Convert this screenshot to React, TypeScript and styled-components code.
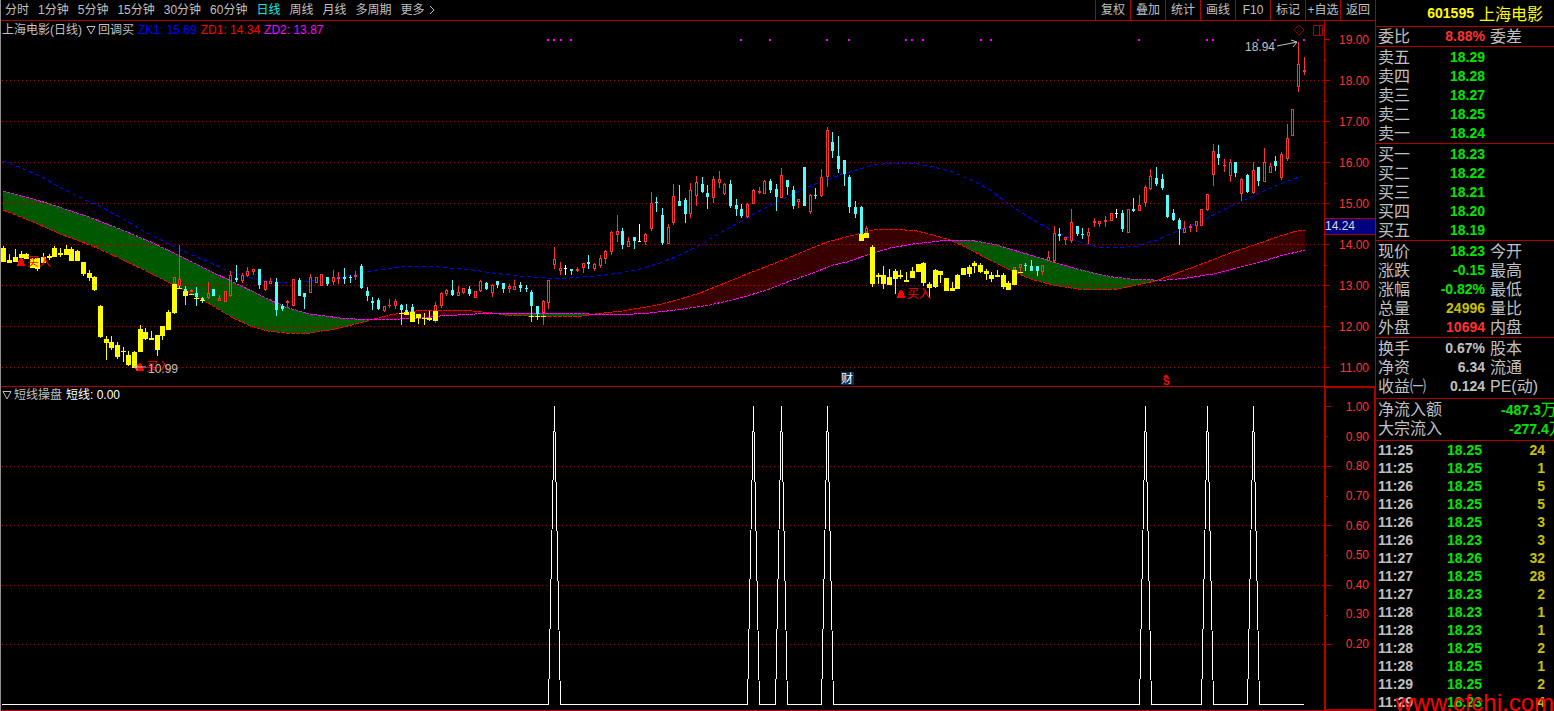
import React from 'react';
import styled, { createGlobalStyle } from 'styled-components';

const color = {
  line: '#b00000',
  text: '#c0c0c0',
  up: '#ff3232',
  down: '#54fcfc',
  signal: '#ffff00',
  green: '#00e600',
  olive: '#c8c000',
  magenta: '#ff00ff',
};

const GlobalStyle = createGlobalStyle`
  * { box-sizing: border-box; }
  body {
    margin: 0;
    background: #000;
    color: ${color.text};
    font-family: "Liberation Sans", "Noto Sans CJK SC", sans-serif;
    font-size: 12px;
  }
  button { font: inherit; }
`;

/* ---------- layout ---------- */

const Page = styled.div`
  display: grid;
  grid-template-columns: minmax(0, 1fr) 179px;
  min-height: 100vh;
`;

const ChartColumn = styled.main`
  display: flex;
  flex-direction: column;
  min-width: 0;
  border-left: 1px solid #909090;
`;

const Toolbar = styled.header`
  display: flex;
  justify-content: space-between;
  height: 21px;
  border-bottom: 1px solid ${color.line};
`;

const Periods = styled.nav`
  display: flex;
  align-items: center;
  gap: 9px;
  padding-left: 4px;
`;

const PeriodButton = styled.button<{ $active?: boolean }>`
  display: flex;
  align-items: center;
  gap: 4px;
  padding: 0;
  border: 0;
  background: none;
  color: ${(p) => (p.$active ? '#00f0f0' : color.text)};
  line-height: 20px;
  white-space: nowrap;
`;

const Tools = styled.div`
  display: flex;
`;

const ToolButton = styled.button`
  width: 35px;
  padding: 0;
  border: 0;
  border-left: 1px solid ${color.line};
  background: none;
  color: ${color.text};
  line-height: 20px;
  white-space: nowrap;
`;

const Pane = styled.section<{ $grow?: boolean }>`
  display: grid;
  grid-template-columns: minmax(0, 1fr) 51px;
  flex: ${(p) => (p.$grow ? '1 0 auto' : 'none')};
  border-bottom: 1px solid ${color.line};
`;

const Plot = styled.div`
  display: flex;
  flex-direction: column;
  min-width: 0;
`;

const PlotTitle = styled.div`
  display: flex;
  align-items: center;
  gap: 4px;
  height: 16px;
  padding: 0 1px;
  line-height: 16px;
  white-space: nowrap;
`;

const MainTitle = styled(PlotTitle)`
  padding-top: 2px;
`;

const TitleButton = styled.button`
  display: flex;
  align-items: center;
  gap: 2px;
  padding: 0;
  border: 0;
  background: none;
  color: inherit;
  line-height: 16px;
`;

const Legend = styled.span<{ $color: string }>`
  color: ${(p) => p.$color};
`;

const TitleIcons = styled.div`
  display: flex;
  align-items: center;
  gap: 8px;
  margin-left: auto;
`;

const MainChart = styled.svg`
  display: block;
  width: 100%;
  height: 349px;
`;

const SubChart = styled.svg`
  display: block;
  width: 100%;
  height: 0;
  min-height: 307px;
  flex: 1 0 0;
`;

const Axis = styled.div<{ $boxed?: boolean }>`
  position: relative;
  display: grid;
  grid-template-columns: 6px 1fr;
  border: 0 solid ${color.line};
  border-width: ${(p) => (p.$boxed ? '1px 1px 1px 2px' : '0 0 0 1px')};
`;

const Ticks = styled.svg`
  display: block;
  width: 6px;
  height: 100%;
`;

const PriceLabels = styled.div`
  padding-right: 6px;
  text-align: right;
  color: ${color.up};
`;

const PriceLabel = styled.div`
  height: 41px;
  line-height: 38px;
  &:last-child { height: 37px; }
`;

const RatioLabels = styled.div`
  display: flex;
  flex-direction: column;
  justify-content: space-between;
  padding: 12px 5px 58px 0;
  text-align: right;
  color: ${color.up};
  line-height: 14px;
`;

const CursorPrice = styled.output`
  position: absolute;
  top: 197px;
  left: 0;
  width: 50px;
  height: 17px;
  border: solid ${color.line};
  border-width: 1px 0;
  background: #000080;
  color: #d8d8d8;
  line-height: 15px;
`;

/* ---------- quote panel ---------- */

const Side = styled.aside`
  position: relative;
  overflow: hidden;
  border-left: 1px solid ${color.line};
  font-size: 16px;
`;

const StockHeader = styled.h1`
  display: flex;
  justify-content: flex-end;
  align-items: center;
  gap: 5px;
  height: 27px;
  margin: 0;
  padding-right: 11px;
  border-bottom: 1px solid ${color.line};
  color: #ffff00;
  font-size: 16px;
  font-weight: 400;
`;

const StockCode = styled.span`
  font-size: 14px;
  font-weight: 700;
`;

const Group = styled.dl<{ $kind?: 'single' | 'short' }>`
  margin: 0;
  padding: ${(p) => (p.$kind === 'single' ? '0' : p.$kind === 'short' ? '1px 0 2px' : '1px 0 0')};
  border-bottom: 1px solid ${color.line};
`;

const QuoteRow = styled.div`
  display: grid;
  grid-template-columns: auto 1fr 64px;
  column-gap: 5px;
  height: 19px;
  padding-left: 2px;
  line-height: 19px;
  white-space: nowrap;
`;

const FlowRow = styled.div`
  display: flex;
  justify-content: space-between;
  height: 19px;
  padding-left: 2px;
  line-height: 19px;
  white-space: nowrap;
`;

const Value = styled.dd<{ $color: string }>`
  margin: 0;
  color: ${(p) => p.$color};
  font-size: 14px;
  font-weight: 700;
  text-align: right;
`;

const FlowValue = styled(Value)<{ $width: number }>`
  width: ${(p) => p.$width}px;
  overflow: hidden;
  text-align: left;
`;

const Unit = styled.span`
  font-size: 16px;
  font-weight: 400;
`;

const Trades = styled.table`
  width: 100%;
  border-collapse: collapse;
  table-layout: fixed;
  font-size: 14px;
  font-weight: 700;
`;

const TradeCell = styled.td<{ $kind: 'time' | 'price' | 'volume' }>`
  height: 18px;
  width: ${(p) => (p.$kind === 'time' ? '50px' : p.$kind === 'price' ? '56px' : 'auto')};
  padding: ${(p) => (p.$kind === 'time' ? '0 0 0 2px' : p.$kind === 'price' ? '0' : '0 9px 0 0')};
  color: ${(p) => (p.$kind === 'time' ? color.text : p.$kind === 'price' ? color.green : color.olive)};
  text-align: ${(p) => (p.$kind === 'time' ? 'left' : 'right')};
  line-height: 18px;
`;

const Watermark = styled.a`
  position: absolute;
  right: 0;
  bottom: -4px;
  color: #ff0000;
  font-size: 24px;
  line-height: 24px;
  text-decoration: none;
`;

/* ---------- chart data ---------- */

type Candle = [x: number, high: number, top: number, bottom: number, low: number];

const signalCandles: Candle[] = [
  [3, 246, 248, 262, 262], [9, 254, 260, 263, 263], [15, 249, 257, 262, 262], [21, 251, 254, 258, 260],
  [26, 253, 254, 259, 259], [32, 258, 259, 268, 268], [37, 258, 258, 269, 271], [43, 253, 257, 263, 263],
  [49, 254, 256, 258, 260], [54, 246, 248, 257, 257], [60, 248, 253, 255, 257], [66, 245, 249, 255, 255],
  [71, 247, 249, 261, 261], [77, 250, 251, 261, 261], [83, 262, 262, 274, 276], [89, 270, 273, 278, 281],
  [94, 276, 277, 290, 291], [100, 305, 306, 337, 338], [106, 336, 339, 343, 360], [111, 336, 342, 348, 350],
  [117, 342, 345, 357, 359], [123, 347, 351, 352, 362], [128, 351, 355, 365, 366], [134, 351, 352, 368, 368],
  [140, 325, 329, 352, 352], [145, 328, 332, 339, 340], [151, 331, 338, 340, 340], [157, 335, 335, 350, 356],
  [162, 326, 326, 336, 340], [168, 310, 312, 330, 330], [174, 284, 284, 313, 314], [179, 286, 288, 289, 289],
  [185, 291, 291, 296, 296], [191, 294, 294, 295, 295], [196, 297, 298, 299, 299], [202, 299, 300, 301, 301],
  [401, 313, 313, 314, 314], [406, 312, 312, 315, 315], [412, 312, 312, 322, 322], [418, 314, 314, 318, 324],
  [424, 313, 318, 319, 325], [429, 311, 318, 320, 321], [435, 311, 311, 321, 321], [531, 316, 316, 317, 317],
  [537, 316, 316, 317, 317], [543, 316, 316, 317, 317], [861, 234, 234, 241, 241], [866, 233, 233, 238, 238],
  [872, 245, 247, 284, 287], [878, 273, 275, 277, 284], [883, 266, 275, 284, 289], [889, 269, 277, 285, 285],
  [895, 269, 271, 279, 294], [900, 270, 275, 277, 279], [906, 272, 280, 282, 282], [912, 267, 271, 278, 278],
  [918, 264, 264, 272, 272], [923, 262, 263, 283, 286], [929, 282, 284, 288, 298], [935, 269, 270, 287, 288],
  [940, 271, 271, 275, 283], [946, 278, 278, 291, 291], [952, 282, 288, 291, 291], [957, 274, 275, 289, 289],
  [963, 268, 268, 275, 275], [969, 265, 267, 274, 277], [974, 261, 263, 266, 273], [980, 263, 265, 272, 273],
  [986, 269, 271, 274, 280], [991, 272, 275, 279, 282], [997, 270, 275, 277, 277], [1003, 273, 275, 287, 289],
  [1008, 281, 283, 290, 290], [1014, 270, 270, 285, 285], [1020, 272, 272, 273, 273],
];

const fallingCandles: Candle[] = [
  [185, 286, 289, 291, 305], [196, 287, 293, 297, 306], [202, 297, 298, 300, 303], [213, 289, 289, 296, 296],
  [236, 265, 278, 280, 282], [259, 269, 269, 285, 289], [276, 278, 282, 310, 316], [282, 304, 306, 309, 311],
  [299, 278, 280, 296, 296], [304, 293, 293, 297, 309], [327, 277, 277, 284, 286], [344, 268, 277, 279, 284],
  [350, 275, 277, 278, 283], [361, 264, 266, 288, 289], [367, 287, 291, 296, 301], [372, 297, 301, 303, 310],
  [378, 298, 300, 309, 310], [401, 304, 305, 310, 325], [406, 304, 310, 312, 312], [412, 304, 307, 312, 312],
  [452, 280, 290, 295, 296], [469, 286, 289, 294, 296], [486, 282, 283, 289, 290], [497, 281, 281, 285, 288],
  [503, 283, 283, 289, 293], [520, 282, 285, 288, 292], [526, 285, 288, 289, 292], [531, 290, 292, 306, 322],
  [537, 306, 306, 314, 320], [571, 269, 269, 271, 275], [588, 255, 262, 264, 269], [622, 228, 231, 245, 249],
  [634, 237, 237, 241, 249], [656, 197, 202, 203, 212], [662, 208, 215, 243, 245], [679, 185, 201, 206, 206],
  [685, 198, 200, 214, 223], [702, 177, 184, 192, 193], [707, 185, 193, 197, 209], [730, 180, 184, 206, 208],
  [736, 199, 205, 209, 216], [741, 204, 209, 216, 218], [770, 179, 181, 190, 193], [776, 184, 189, 197, 211],
  [787, 180, 180, 187, 195], [793, 186, 190, 206, 209], [804, 167, 167, 206, 206], [815, 188, 195, 196, 199],
  [832, 132, 142, 151, 158], [838, 136, 156, 169, 173], [844, 160, 160, 174, 186], [849, 175, 177, 207, 213],
  [855, 201, 207, 214, 218], [861, 206, 207, 234, 234], [1025, 263, 265, 266, 271], [1031, 260, 266, 271, 271],
  [1037, 266, 266, 271, 276], [1059, 228, 234, 236, 241], [1077, 226, 226, 234, 236], [1082, 228, 234, 235, 239],
  [1122, 210, 213, 229, 232], [1133, 198, 209, 211, 212], [1156, 167, 178, 184, 186], [1162, 174, 179, 188, 190],
  [1167, 195, 195, 217, 218], [1173, 209, 213, 220, 221], [1179, 218, 220, 229, 245], [1218, 145, 154, 158, 165],
  [1235, 162, 162, 173, 177], [1247, 174, 175, 192, 193], [1258, 167, 167, 181, 186], [1275, 156, 161, 166, 171],
];

const risingCandles: Candle[] = [
  [174, 277, 277, 284, 284], [179, 245, 279, 286, 287], [191, 289, 290, 292, 292], [208, 282, 293, 298, 299],
  [219, 295, 298, 301, 301], [225, 291, 291, 302, 302], [230, 271, 275, 296, 297], [242, 273, 275, 281, 283],
  [247, 267, 271, 276, 277], [253, 269, 269, 272, 275], [265, 281, 281, 290, 291], [270, 278, 281, 284, 284],
  [287, 300, 301, 303, 307], [293, 279, 279, 306, 306], [310, 274, 277, 293, 293], [316, 277, 277, 283, 283],
  [321, 274, 274, 286, 286], [333, 270, 277, 282, 285], [338, 272, 277, 279, 284], [355, 271, 275, 277, 280],
  [384, 306, 306, 311, 312], [389, 299, 305, 306, 308], [395, 299, 301, 306, 309], [435, 302, 305, 311, 323],
  [441, 292, 293, 306, 308], [446, 289, 290, 294, 296], [458, 286, 292, 296, 296], [463, 288, 288, 293, 294],
  [475, 291, 291, 298, 298], [480, 280, 281, 291, 292], [492, 284, 285, 293, 297], [509, 284, 286, 289, 293],
  [514, 280, 286, 290, 290], [543, 300, 301, 313, 325], [548, 280, 280, 303, 309], [554, 247, 259, 265, 269],
  [560, 262, 268, 271, 275], [577, 267, 269, 271, 272], [583, 263, 263, 268, 273], [594, 263, 264, 269, 271],
  [600, 255, 258, 266, 268], [605, 250, 251, 259, 264], [611, 231, 232, 252, 255], [617, 215, 231, 235, 242],
  [628, 237, 241, 247, 247], [645, 233, 234, 242, 245], [651, 192, 203, 229, 231], [668, 224, 227, 244, 244],
  [673, 184, 196, 223, 225], [690, 183, 190, 214, 218], [696, 176, 182, 196, 206], [713, 176, 179, 198, 203],
  [719, 171, 179, 183, 188], [724, 183, 184, 194, 195], [747, 203, 204, 217, 218], [753, 189, 190, 204, 204],
  [759, 187, 191, 193, 194], [764, 180, 181, 194, 194], [781, 168, 175, 198, 198], [798, 199, 199, 202, 208],
  [810, 194, 195, 212, 214], [821, 169, 177, 196, 197], [827, 127, 130, 177, 187], [866, 226, 228, 233, 233],
  [1014, 267, 267, 270, 270], [1020, 264, 264, 268, 272], [1042, 265, 265, 272, 275], [1048, 251, 257, 261, 261],
  [1054, 226, 233, 261, 263], [1065, 237, 237, 240, 245], [1071, 209, 222, 241, 243], [1088, 228, 232, 236, 244],
  [1094, 218, 221, 223, 227], [1099, 221, 221, 224, 227], [1105, 216, 220, 222, 227], [1111, 213, 213, 221, 221],
  [1128, 209, 209, 233, 233], [1139, 195, 205, 211, 211], [1145, 185, 187, 203, 207], [1150, 169, 176, 189, 190],
  [1184, 221, 228, 233, 233], [1190, 224, 226, 228, 232], [1196, 221, 221, 226, 232], [1201, 209, 209, 226, 226],
  [1207, 194, 194, 210, 211], [1213, 144, 151, 175, 186], [1224, 159, 165, 166, 172], [1230, 159, 162, 176, 182],
  [1241, 178, 179, 194, 201], [1253, 162, 170, 193, 194], [1264, 148, 162, 182, 182], [1270, 163, 166, 173, 173],
  [1281, 152, 154, 178, 180], [1287, 124, 138, 159, 161], [1292, 109, 109, 136, 136], [1298, 42, 64, 87, 92],
  [1304, 57, 70, 72, 75],
];

const flatCandles: Candle[] = [[565, 265, 268, 269, 275], [639, 224, 241, 242, 242], [1116, 209, 213, 214, 218]];

type Point = [number, number];

const zk1: Point[] = [
  [3, 161], [14, 165], [40, 176], [63, 189], [83, 199], [97, 205], [120, 217], [143, 231], [167, 243], [187, 253],
  [207, 261], [230, 272], [247, 277], [267, 281], [287, 283], [310, 281], [333, 279], [353, 275], [377, 270],
  [400, 267], [427, 266], [450, 268], [473, 270], [493, 273], [520, 276], [547, 278], [570, 278], [597, 276],
  [620, 273], [640, 269], [660, 263], [680, 255], [700, 245], [720, 233], [740, 222], [763, 209], [787, 197],
  [803, 189], [823, 181], [840, 175], [857, 170], [873, 165], [893, 163], [913, 163], [933, 167], [953, 172],
  [973, 181], [990, 190], [1010, 205], [1030, 218], [1053, 231], [1077, 241], [1097, 247], [1117, 248],
  [1137, 246], [1157, 240], [1177, 231], [1200, 222], [1227, 208], [1253, 196], [1280, 184], [1302, 176],
];

const zd1: Point[] = [
  [3, 210], [36, 223], [60, 234], [90, 245], [119, 258], [150, 273], [176, 286], [203, 300], [233, 318], [250, 326],
  [268, 331], [285, 333], [310, 333], [335, 329], [360, 323], [370, 320], [390, 315], [407, 312], [425, 310],
  [463, 310], [493, 313], [505, 315], [527, 316], [582, 316], [595, 314], [622, 311], [640, 308], [657, 305],
  [677, 300], [700, 293], [720, 285], [747, 274], [773, 264], [800, 253], [827, 242], [850, 236], [873, 230],
  [893, 229], [917, 231], [933, 235], [950, 240], [967, 248], [990, 260], [1010, 270], [1033, 280], [1053, 285],
  [1077, 289], [1097, 290], [1117, 289], [1137, 285], [1155, 281], [1180, 272], [1207, 262], [1233, 252],
  [1260, 243], [1280, 236], [1300, 230], [1305, 230],
];

const zd2: Point[] = [
  [3, 191], [15, 194], [47, 203], [86, 216], [120, 229], [153, 243], [180, 256], [210, 271], [233, 282], [260, 295],
  [285, 307], [310, 314], [340, 318], [370, 320], [400, 319], [422, 318], [440, 316], [457, 315], [494, 313],
  [543, 313], [590, 314], [615, 315], [633, 314], [650, 313], [667, 311], [683, 309], [710, 305], [740, 298],
  [767, 290], [790, 281], [813, 273], [833, 265], [847, 262], [870, 254], [890, 248], [913, 244], [940, 241],
  [970, 240], [997, 245], [1013, 250], [1037, 257], [1060, 264], [1077, 269], [1097, 274], [1113, 277],
  [1130, 279], [1153, 280], [1167, 280], [1187, 278], [1213, 274], [1237, 268], [1260, 262], [1280, 256],
  [1305, 250],
];

const bands = [
  { from: 3, to: 370, fill: '#005800' },
  { from: 370, to: 494, fill: '#380000' },
  { from: 494, to: 590, fill: '#005800' },
  { from: 590, to: 950, fill: '#380000' },
  { from: 950, to: 1156, fill: '#005800' },
  { from: 1156, to: 1305, fill: '#380000' },
];

const alertDots = [547, 553, 560, 570, 740, 769, 826, 848, 905, 911, 922, 980, 990, 1138, 1206, 1212, 1257, 1274, 1303];
const spikes = [554, 753, 781, 827, 1145, 1207, 1253];
const priceGrid = [80, 121, 162, 203, 244, 285, 326, 367];
const ratioGrid = [466, 525, 585, 644];

const box = (x: number, y: number, w: number, h: number) => `M${x} ${y}h${w}v${h}h${-w}z`;

const solidPath = (candles: Candle[], width: number) =>
  candles
    .map(([x, hi, t, b, lo]) => {
      const wick = (hi < t ? box(x, hi, 1, t - hi) : '') + (lo > b ? box(x, b, 1, lo - b) : '');
      return wick + box(x - (width - 1) / 2, t, width, b - t);
    })
    .join('');

const hollowPath = (candles: Candle[]) =>
  candles
    .map(([x, hi, t, b, lo]) => {
      const wick = (hi < t ? box(x, hi, 1, t - hi) : '') + (lo > b ? box(x, b, 1, lo - b) : '');
      const inner = b - t > 2 ? box(x, t + 1, 1, b - t - 2) : '';
      return wick + box(x - 1, t, 3, b - t) + inner;
    })
    .join('');

const toPoints = (points: Point[]) => points.map((p) => p.join(',')).join(' ');

const valueAt = (points: Point[], x: number) => {
  const i = Math.max(1, points.findIndex((p) => p[0] >= x));
  const [x0, y0] = points[i - 1];
  const [x1, y1] = points[i];
  return y0 + ((y1 - y0) * (x - x0)) / (x1 - x0);
};

const bandPoints = (from: number, to: number) => {
  const xs: number[] = [];
  for (let x = from; x <= to; x += 1) xs.push(x);
  const upper: Point[] = xs.map((x) => [x, valueAt(zd1, x)]);
  const lower: Point[] = xs.reverse().map((x) => [x, valueAt(zd2, x)]);
  return toPoints([...upper, ...lower]);
};

const spikeLine = `M2 704.5${spikes.map((x) => `H${x - 5.5}L${x + 0.5} 406L${x + 6.5} 704.5`).join('')}H1304`;

/* ---------- drawings ---------- */

const Triangle = () => (
  <svg width="10" height="10" viewBox="0 0 10 10" fill="none" stroke="currentColor" aria-hidden="true">
    <path d="M1 1.5H9L5 9Z" />
  </svg>
);

const Chevron = () => (
  <svg width="6" height="10" viewBox="0 0 6 10" fill="none" stroke="currentColor" aria-hidden="true">
    <path d="M1 1L5 5L1 9" />
  </svg>
);

const BuyMark = ({ x, y }: { x: number; y: number }) => (
  <g fill="#ff0000">
    <path d={`M${x} ${y}h8v-2h-1v-3h-1v-2h-1v-1h-2v1h-1v2h-1v3h-1z`} />
    <text x={x + 10} y={y} fontSize="12">买入</text>
  </g>
);

const Candles = () => (
  <MainChart viewBox="1 37 1323 349" preserveAspectRatio="none" role="img" aria-label="日线">
    <g shapeRendering="crispEdges" fill="none">
      {bands.map((b) => (
        <polygon key={b.from} points={bandPoints(b.from, b.to)} fill={b.fill} />
      ))}
      {priceGrid.map((y) => (
        <line key={y} x1="2" x2="1324" y1={y + 0.5} y2={y + 0.5} stroke={color.line} strokeDasharray="1 3" />
      ))}
      <polyline points={toPoints(zk1)} stroke="#0000ff" strokeDasharray="4 3" />
      <polyline points={toPoints(zd1)} stroke="#ff0000" strokeDasharray="4 1" />
      <polyline points={toPoints(zd2)} stroke={color.magenta} strokeDasharray="3 1" />
      <path d={hollowPath(risingCandles)} fill={color.up} fillRule="evenodd" />
      <path d={solidPath(fallingCandles, 3)} fill={color.down} />
      <path d={solidPath(flatCandles, 3)} fill="#ffffff" />
      <path d={solidPath(signalCandles, 5)} fill={color.signal} />
      {alertDots.map((x) => (
        <rect key={x} x={x} y="39" width="2" height="2" fill={color.magenta} />
      ))}
    </g>
    <BuyMark x={17} y={266} />
    <BuyMark x={136} y={371} />
    <BuyMark x={897} y={298} />
    <g fill="none" stroke={color.text}>
      <path d="M1277 46L1297 42M1291 40L1297 42L1293 47" />
      <path d="M146 367H134M138 365L134 367L138 370" />
    </g>
    <g fill={color.text} fontSize="12">
      <text x="1245" y="51">18.94</text>
      <text x="148" y="373">10.99</text>
    </g>
    <rect x="841" y="372" width="13" height="13" fill="#003060" />
    <text x="841" y="383" fill="#ffffff" fontSize="12">财</text>
    <path d="M1163 377h6l-2-2h-2z" fill="#ff0000" />
    <text x="1163" y="385" fill="#ff0000" fontSize="10" fontWeight="700">S</text>
  </MainChart>
);

const Spikes = () => (
  <SubChart viewBox="1 403 1323 307" preserveAspectRatio="none" role="img" aria-label="短线">
    <g shapeRendering="crispEdges" fill="none">
      {ratioGrid.map((y) => (
        <line key={y} x1="2" x2="1324" y1={y + 0.5} y2={y + 0.5} stroke={color.line} strokeDasharray="1 3" />
      ))}
      <path d={spikeLine} stroke="#ffffff" strokeLinejoin="bevel" />
    </g>
  </SubChart>
);

const AxisTicks = ({ top, height, major, minor }: { top: number; height: number; major: number[]; minor: number[] }) => (
  <Ticks viewBox={`0 ${top} 6 ${height}`} preserveAspectRatio="none" aria-hidden="true">
    <g fill={color.line} shapeRendering="crispEdges">
      {major.map((y) => <rect key={y} x="0" y={y} width="5" height="1" />)}
      {minor.map((y) => <rect key={y} x="0" y={y} width="2" height="1" />)}
    </g>
  </Ticks>
);

/* ---------- content ---------- */

const periods = ['分时', '1分钟', '5分钟', '15分钟', '30分钟', '60分钟', '日线', '周线', '月线', '多周期'];
const tools = ['复权', '叠加', '统计', '画线', 'F10', '标记', '+自选', '返回'];
const prices = ['19.00', '18.00', '17.00', '16.00', '15.00', '14.00', '13.00', '12.00', '11.00'];
const ratios = ['1.00', '0.90', '0.80', '0.70', '0.60', '0.50', '0.40', '0.30', '0.20'];

type Quote = [label: string, value: string, tone: string, extra?: string];

const groups: { kind?: 'single' | 'short'; rows: Quote[] }[] = [
  { kind: 'single', rows: [['委比', '8.88%', color.up, '委差']] },
  {
    rows: [
      ['卖五', '18.29', color.green], ['卖四', '18.28', color.green], ['卖三', '18.27', color.green],
      ['卖二', '18.25', color.green], ['卖一', '18.24', color.green],
    ],
  },
  {
    rows: [
      ['买一', '18.23', color.green], ['买二', '18.22', color.green], ['买三', '18.21', color.green],
      ['买四', '18.20', color.green], ['买五', '18.19', color.green],
    ],
  },
  {
    rows: [
      ['现价', '18.23', color.green, '今开'], ['涨跌', '-0.15', color.green, '最高'],
      ['涨幅', '-0.82%', color.green, '最低'], ['总量', '24996', color.olive, '量比'],
      ['外盘', '10694', color.up, '内盘'],
    ],
  },
  {
    kind: 'short',
    rows: [
      ['换手', '0.67%', color.text, '股本'], ['净资', '6.34', color.text, '流通'],
      ['收益㈠', '0.124', color.text, 'PE(动)'],
    ],
  },
];

const trades = [
  ['11:25', '18.25', '24'], ['11:25', '18.25', '1'], ['11:26', '18.25', '5'], ['11:26', '18.25', '5'],
  ['11:26', '18.25', '3'], ['11:26', '18.23', '3'], ['11:27', '18.26', '32'], ['11:27', '18.25', '28'],
  ['11:27', '18.23', '2'], ['11:28', '18.23', '1'], ['11:28', '18.23', '1'], ['11:28', '18.25', '2'],
  ['11:28', '18.25', '1'], ['11:29', '18.25', '2'], ['11:29', '18.23', '4'],
];

export default function App() {
  return (
    <>
      <GlobalStyle />
      <Page>
        <ChartColumn>
          <Toolbar>
            <Periods>
              {periods.map((p) => (
                <PeriodButton key={p} $active={p === '日线'}>{p}</PeriodButton>
              ))}
              <PeriodButton>更多<Chevron /></PeriodButton>
            </Periods>
            <Tools>
              {tools.map((t) => <ToolButton key={t}>{t}</ToolButton>)}
            </Tools>
          </Toolbar>
          <Pane>
            <Plot>
              <MainTitle>
                <span>上海电影(日线)</span>
                <TitleButton><Triangle />回调买</TitleButton>
                <Legend $color="#0000ff">ZK1: 15.69</Legend>
                <Legend $color="#ff0000">ZD1: 14.34</Legend>
                <Legend $color={color.magenta}>ZD2: 13.87</Legend>
                <TitleIcons>
                  <svg width="12" height="12" viewBox="0 0 12 12" fill="none" stroke="#900000" aria-hidden="true">
                    <path d="M6 1L11 6L6 11L1 6Z" />
                  </svg>
                  <svg width="10" height="12" viewBox="0 0 10 12" fill="none" stroke={color.line} aria-hidden="true">
                    <path d="M.5 1.5h9v10h-9zM6.5 1.5v10" />
                  </svg>
                </TitleIcons>
              </MainTitle>
              <Candles />
            </Plot>
            <Axis>
              <AxisTicks
                top={21}
                height={365}
                major={[39, ...priceGrid]}
                minor={[60, 101, 142, 183, 224, 265, 306, 347]}
              />
              <PriceLabels>
                {prices.map((p) => <PriceLabel key={p}>{p}</PriceLabel>)}
              </PriceLabels>
              <CursorPrice>14.24</CursorPrice>
            </Axis>
          </Pane>
          <Pane $grow>
            <Plot>
              <PlotTitle>
                <TitleButton><Triangle />短线操盘</TitleButton>
                <Legend $color="#ffffff">短线: 0.00</Legend>
              </PlotTitle>
              <Spikes />
            </Plot>
            <Axis $boxed>
              <AxisTicks top={388} height={321} major={[406, ...ratioGrid]} minor={[436, 496, 555, 615]} />
              <RatioLabels>
                {ratios.map((r) => <span key={r}>{r}</span>)}
              </RatioLabels>
            </Axis>
          </Pane>
        </ChartColumn>

        <Side>
          <StockHeader><StockCode>601595</StockCode>上海电影</StockHeader>
          {groups.map((g) => (
            <Group key={g.rows[0][0]} $kind={g.kind}>
              {g.rows.map(([label, value, tone, extra]) => (
                <QuoteRow key={label}>
                  <dt>{label}</dt>
                  <Value $color={tone}>{value}</Value>
                  {extra && <dt>{extra}</dt>}
                </QuoteRow>
              ))}
            </Group>
          ))}
          <Group $kind="short">
            <FlowRow>
              <dt>净流入额</dt>
              <FlowValue $color={color.green} $width={53}>-487.3<Unit>万</Unit></FlowValue>
            </FlowRow>
            <FlowRow>
              <dt>大宗流入</dt>
              <FlowValue $color={color.green} $width={45}>-277.4<Unit>万</Unit></FlowValue>
            </FlowRow>
          </Group>
          <Trades>
            <tbody>
              {trades.map(([time, price, volume], i) => (
                <tr key={i}>
                  <TradeCell $kind="time">{time}</TradeCell>
                  <TradeCell $kind="price">{price}</TradeCell>
                  <TradeCell $kind="volume">{volume}</TradeCell>
                </tr>
              ))}
            </tbody>
          </Trades>
          <Watermark href="#">www.cfchi.com</Watermark>
        </Side>
      </Page>
    </>
  );
}
